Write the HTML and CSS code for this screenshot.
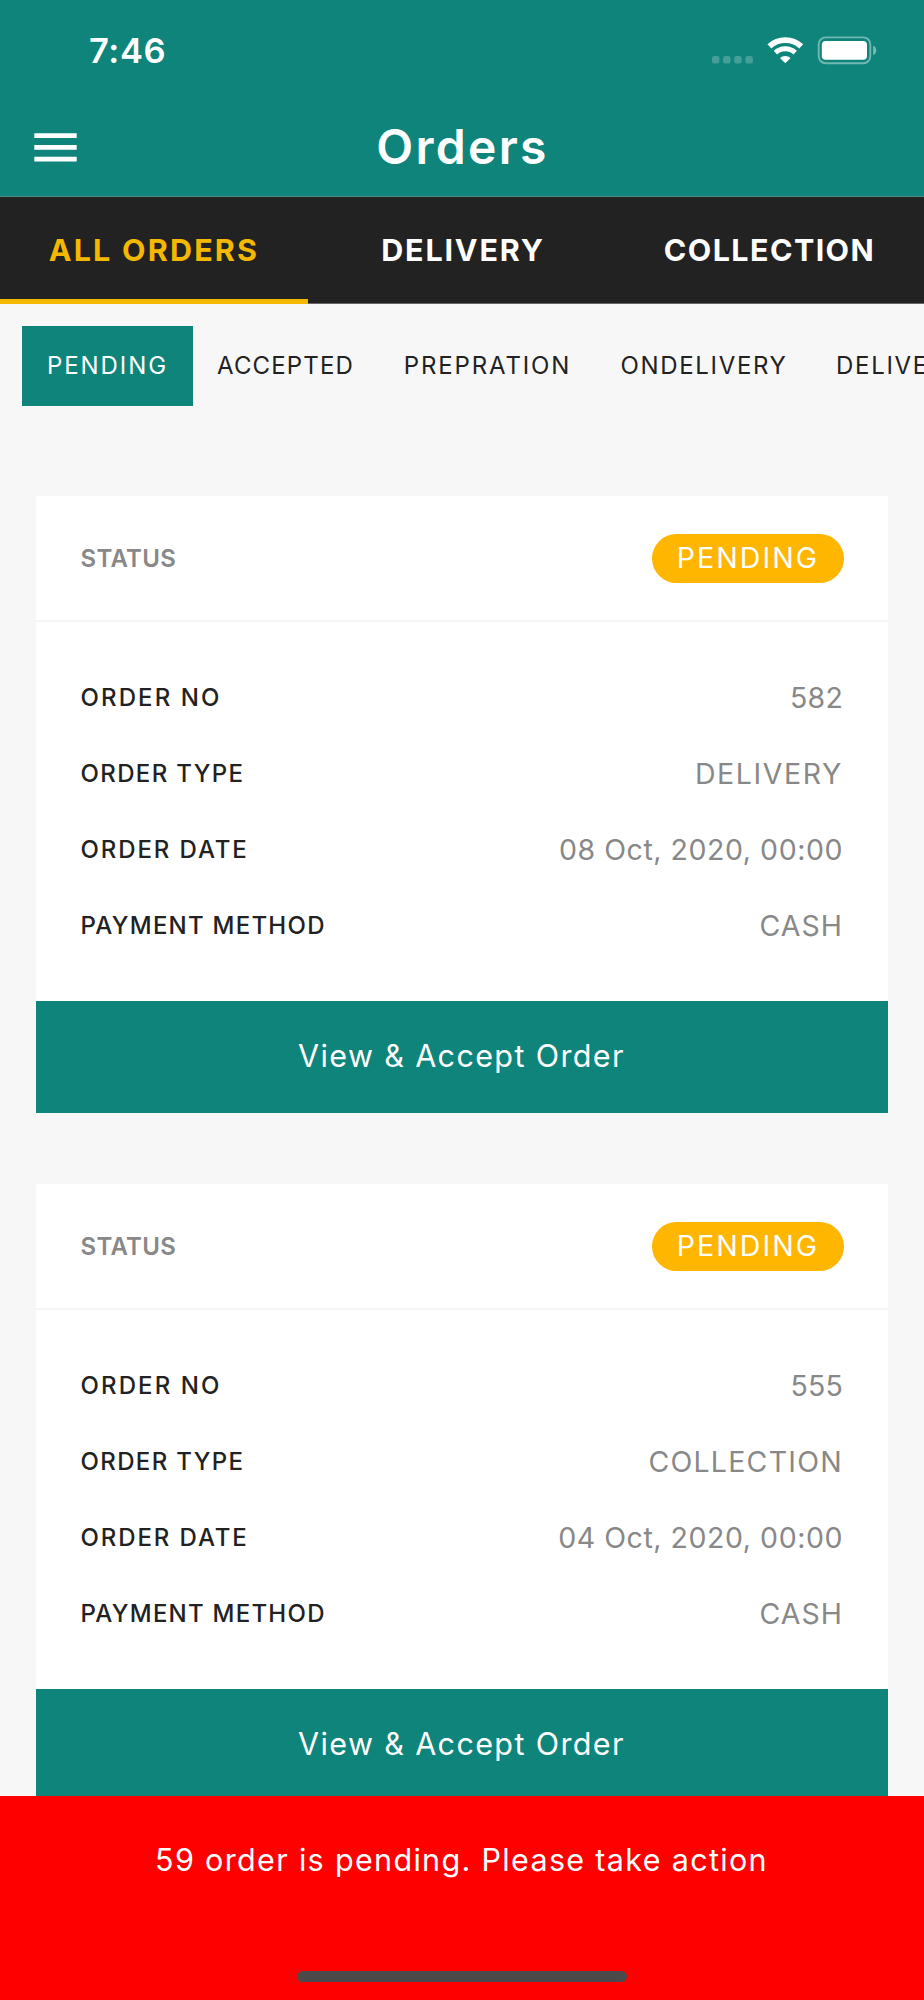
FILE: index.html
```html
<!DOCTYPE html>
<html lang="en">
<head>
<meta charset="utf-8">
<title>Orders</title>
<link rel="stylesheet" href="styles.css">
</head>
<body>
<div class="screen">
  <header class="header">
    <div class="statusbar">
      <span class="clock">7:46</span>
      <svg class="indicators" width="170" height="33" viewBox="0 0 170 33">
        <g fill="#fff" fill-opacity=".22">
          <rect x="2" y="22" width="7.4" height="7.4" rx="2.2"/>
          <rect x="13.1" y="22" width="7.4" height="7.4" rx="2.2"/>
          <rect x="24.2" y="22" width="7.4" height="7.4" rx="2.2"/>
          <rect x="35.3" y="22" width="7.6" height="7.4" rx="2.2"/>
        </g>
        <g fill="none" stroke="#fff">
          <path stroke-width="5.8" d="M59.4 12.3A23.3 23.3 0 0 1 91.2 12.3"/>
          <path stroke-width="5" d="M65.4 18.7A14.5 14.5 0 0 1 85.2 18.7"/>
        </g>
        <path fill="#fff" d="M75.3 29.3L70 23.9A8 8 0 0 1 80.6 23.9Z"/>
        <rect x="108.7" y="3.4" width="51.6" height="25.9" rx="7" fill="none" stroke="#fff" stroke-opacity=".42" stroke-width="1.9"/>
        <rect x="111.8" y="7" width="45.2" height="18.8" rx="3.8" fill="#fff"/>
        <path fill="#fff" fill-opacity=".45" d="M163.2 11.8C167.3 13.4 167.3 19.6 163.2 21.2Z"/>
      </svg>
    </div>
    <div class="navbar">
      <svg class="menu" width="43" height="29" viewBox="0 0 43 29">
        <path fill="#fff" d="M.3.2h42.4V5H.3zM.3 12h42.4v4.8H.3zM.3 23.7h42.4v4.8H.3z"/>
      </svg>
      <h1 class="title">Orders</h1>
    </div>
  </header>

  <nav class="tabs">
    <a class="tab tab-active">ALL ORDERS</a>
    <a class="tab tab-delivery">DELIVERY</a>
    <a class="tab tab-collection">COLLECTION</a>
  </nav>

  <main class="content">
    <div class="chips">
      <span class="chip chip-pending">PENDING</span>
      <span class="chip chip-accepted">ACCEPTED</span>
      <span class="chip chip-prepration">PREPRATION</span>
      <span class="chip chip-ondelivery">ONDELIVERY</span>
      <span class="chip chip-delivered">DELIVERED</span>
    </div>

    <section class="card">
      <div class="card-head"><span class="status">STATUS</span><span class="badge">PENDING</span></div>
      <div class="card-body">
        <div class="row"><span class="label label-no">ORDER NO</span><span class="value value-no">582</span></div>
        <div class="row"><span class="label label-type">ORDER TYPE</span><span class="value value-type">DELIVERY</span></div>
        <div class="row"><span class="label label-date">ORDER DATE</span><span class="value value-date">08 Oct, 2020, 00:00</span></div>
        <div class="row"><span class="label label-payment">PAYMENT METHOD</span><span class="value value-payment">CASH</span></div>
      </div>
      <div class="accept">View &amp; Accept Order</div>
    </section>

    <section class="card">
      <div class="card-head"><span class="status">STATUS</span><span class="badge">PENDING</span></div>
      <div class="card-body">
        <div class="row"><span class="label label-no">ORDER NO</span><span class="value value-no">555</span></div>
        <div class="row"><span class="label label-type">ORDER TYPE</span><span class="value value-collection">COLLECTION</span></div>
        <div class="row"><span class="label label-date">ORDER DATE</span><span class="value value-date">04 Oct, 2020, 00:00</span></div>
        <div class="row"><span class="label label-payment">PAYMENT METHOD</span><span class="value value-payment">CASH</span></div>
      </div>
      <div class="accept">View &amp; Accept Order</div>
    </section>
  </main>

  <footer class="alert">
    <div class="alert-text">59 order is pending. Please take action</div>
    <div class="home-indicator"></div>
  </footer>
</div>
</body>
</html>
```
FILE: styles.css
```css
* { box-sizing: border-box; }
body {
  margin: 0;
  background: #f7f7f7;
  font-family: Inter, "Liberation Sans", sans-serif;
  color: #222;
}
.screen {
  display: flex;
  flex-direction: column;
  width: 924px;
  height: 2000px;
  overflow: hidden;
}

/* Header */
.header {
  flex: none;
  height: 197px;
  background: #0f847b;
  border-bottom: 1px solid #4b8a85;
  color: #fff;
}
.statusbar {
  display: flex;
  align-items: center;
  justify-content: space-between;
  height: 99px;
  padding: 2px 44px 0 89px;
}
.clock { font-size: 34.5px; font-weight: 600; letter-spacing: .6px; }
.indicators, .menu { display: block; }
.navbar {
  display: grid;
  grid-template-columns: 200px 1fr 200px;
  align-items: center;
  height: 97px;
}
.menu { margin-left: 34px; }
.title {
  margin: 0;
  padding: 0 0 2px 1px;
  text-align: center;
  font-size: 48px;
  line-height: 60px;
  font-weight: 600;
  letter-spacing: 2.3px;
}

/* Order type tabs */
.tabs {
  flex: none;
  display: grid;
  grid-template-columns: repeat(3, 1fr);
  height: 107px;
  background: linear-gradient(#222 106px, #666 106px);
}
.tab {
  display: flex;
  align-items: center;
  justify-content: center;
  padding-bottom: 2px;
  color: #fff;
  font-size: 30.5px;
  font-weight: 700;
}
.tab-active {
  color: #f4b800;
  letter-spacing: 2.2px;
  padding-top: 3px;
  padding-bottom: 0;
  border-bottom: 5px solid #f4b800;
}
.tab-delivery { letter-spacing: 1.8px; padding-left: 2px; }
.tab-collection { letter-spacing: 1.4px; padding-right: 1px; }

/* Status filter chips */
.content { flex: 1; min-height: 0; overflow: hidden; }
.chips {
  display: flex;
  height: 80px;
  margin: 22px 0 90px 22px;
}
.chip {
  flex: none;
  display: flex;
  align-items: center;
  justify-content: center;
  padding-bottom: 1px;
  font-size: 24px;
}
.chip-pending { width: 171px; background: #0f847b; color: #fff; letter-spacing: 1.9px; }
.chip-accepted { width: 185px; letter-spacing: 1.15px; }
.chip-prepration { width: 218px; padding-left: 1px; letter-spacing: 1.85px; }
.chip-ondelivery { width: 215px; padding-left: 1px; letter-spacing: 1.65px; }
.chip-delivered { padding-left: 25px; letter-spacing: 1.7px; }

/* Order cards */
.card {
  width: 852px;
  margin: 0 auto 71px;
  background: #fff;
}
.card-head {
  display: flex;
  align-items: center;
  justify-content: space-between;
  height: 126px;
  padding: 0 44px 0 44.5px;
  border-bottom: 2px solid #f5f5f5;
}
.status { color: #888; font-size: 24px; font-weight: 600; letter-spacing: .3px; }
.badge {
  width: 192px;
  height: 49px;
  border-radius: 25px;
  background: #ffb600;
  color: #fff;
  font-size: 28.5px;
  line-height: 48px;
  text-align: center;
  letter-spacing: 2.1px;
}
.card-body { height: 379px; padding: 37px 45px 0 44.5px; }
.row {
  display: flex;
  align-items: center;
  justify-content: space-between;
  height: 76px;
}
.label { font-size: 24px; font-weight: 500; }
.label-no { letter-spacing: 2.1px; }
.label-type { letter-spacing: 1.35px; }
.label-date { letter-spacing: 1.9px; }
.label-payment { letter-spacing: 1.25px; }
.value { color: #888; font-size: 28.5px; }
.value-no { letter-spacing: .2px; }
.value-type { letter-spacing: 1.6px; }
.value-collection { letter-spacing: 1.25px; }
.value-date { letter-spacing: .55px; }
.value-payment { letter-spacing: 1px; }
.accept {
  height: 112px;
  padding-right: 1px;
  background: #0f847b;
  color: #fff;
  font-size: 30.5px;
  line-height: 110px;
  text-align: center;
  letter-spacing: 1.38px;
}

/* Pending orders alert */
.alert { flex: none; height: 204px; background: #f00; color: #fff; }
.alert-text {
  height: 175px;
  padding-right: 1px;
  font-size: 30.5px;
  line-height: 128px;
  text-align: center;
  letter-spacing: 1.33px;
}
.home-indicator {
  width: 330px;
  height: 11px;
  margin: 0 auto;
  border-radius: 6px;
  background: #4a4a4a;
}
```
